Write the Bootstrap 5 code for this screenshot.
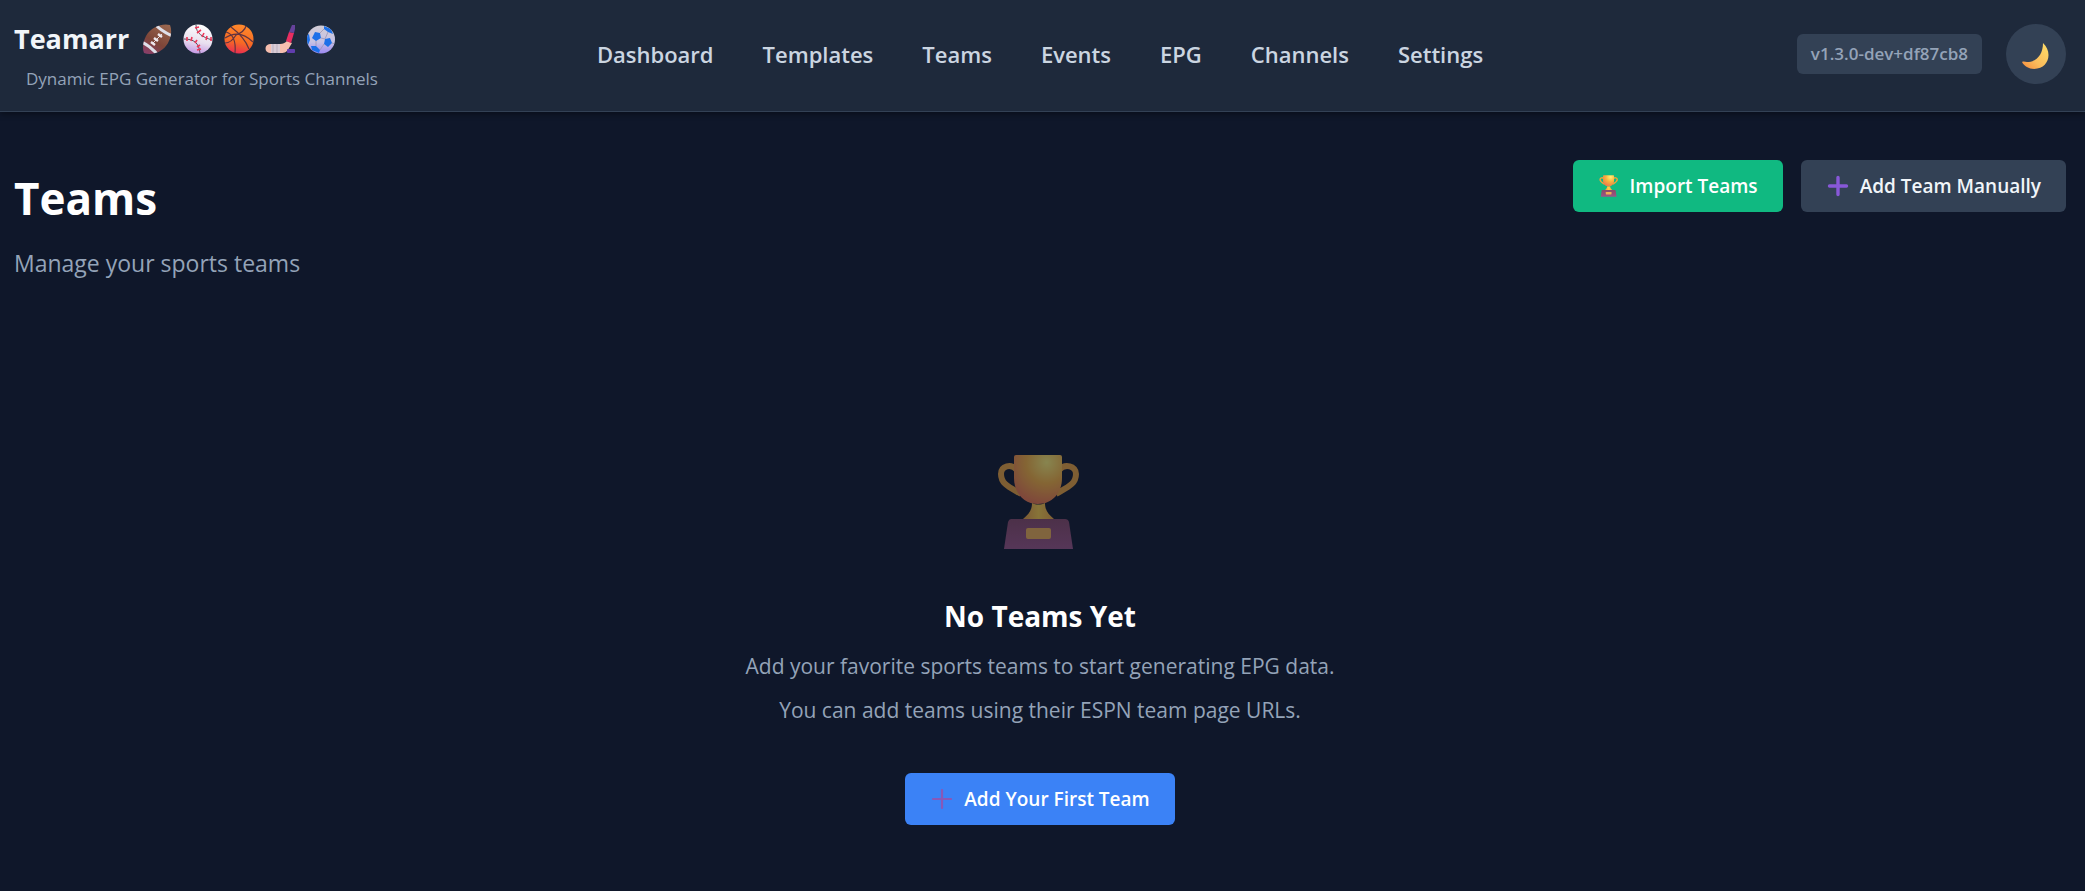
<!DOCTYPE html>
<html lang="en" data-bs-theme="dark">
<head>
<meta charset="utf-8">
<meta name="viewport" content="width=device-width, initial-scale=1">
<title>Teams - Teamarr</title>
<link href="https://cdn.jsdelivr.net/npm/bootstrap@5.3.0/dist/css/bootstrap.min.css" rel="stylesheet">
<style>
  body { background: #0f172a; color: #f1f5f9; font-family: "Open Sans", "Noto Sans", sans-serif; font-size: 20px; line-height: 32px; }
  .site-header { background: #1e293b; border-bottom: 1px solid #334155; box-shadow: 0 2px 6px rgba(0,0,0,.4); padding: 14px 19px 17px 14px; }
  .side { flex: 1 1 0; }
  .brand { font-size: 27px; line-height: 50px; font-weight: 700; color: #f1f5f9; gap: 13px; }
  .sports { gap: 11px; }
  .sports svg { width: 30px; height: 30px; }
  .tagline { font-size: 17px; line-height: 30px; color: #94a3b8; padding-left: 12px; }
  .main-nav { gap: 49px; font-size: 22px; }
  .main-nav .nav-link { color: #cbd5e1; font-weight: 600; padding: 0; }
  .version { background: #334155; color: #94a3b8; font-size: 17px; line-height: 40px; font-weight: 600; border-radius: 6px; padding: 0 14px; }
  .theme-btn { width: 60px; height: 60px; background: #334155; border-radius: 50%; }
  .page { padding: 48px 19px 48px 14px; }
  .page-title { font-size: 44px; line-height: 76px; font-weight: 700; margin-bottom: 8px; }
  .subtitle { font-size: 23px; line-height: 38px; color: #94a3b8; }
  .actions { gap: 18px; }
  .act { height: 52px; padding: 0 25px; border: 0; border-radius: 6px; font-size: 19px; font-weight: 600; color: #f1f5f9; gap: 10px; }
  .act svg { width: 24px; height: 24px; }
  .act .mini-cup { width: 22px; height: 22px; }
  .act-green { background: #10b981; color: #fff; }
  .act-slate { background: #334155; }
  .act-blue { background: #3b82f6; color: #fff; }
  .empty { padding-top: 172px; }
  .empty-cup { width: 96px; height: 96px; opacity: .5; }
  .empty-title { font-size: 28px; line-height: 44px; font-weight: 700; margin: 44px 0 6px; }
  .empty-text { font-size: 21px; line-height: 44px; color: #94a3b8; margin-bottom: 41px; }
</style>
</head>
<body>
<svg width="0" height="0" class="position-absolute" aria-hidden="true">
  <defs>
    <radialGradient id="gold" cx=".68" cy=".15" r=".85"><stop offset="0" stop-color="#fff275"/><stop offset=".5" stop-color="#f9b33e"/><stop offset="1" stop-color="#ee7a4c"/></radialGradient>
    <linearGradient id="stem" x1="0" x2="1"><stop offset="0" stop-color="#e99a3f"/><stop offset=".5" stop-color="#ffd047"/><stop offset="1" stop-color="#f0a63f"/></linearGradient>
    <linearGradient id="base" x1="0" y1="0" x2="0" y2="1"><stop offset="0" stop-color="#8a4a68"/><stop offset="1" stop-color="#9c5686"/></linearGradient>
    <linearGradient id="leather" x1=".8" y1="0" x2=".2" y2="1"><stop offset="0" stop-color="#9a674f"/><stop offset=".6" stop-color="#7d4538"/><stop offset="1" stop-color="#8a3f68"/></linearGradient>
    <linearGradient id="white-ball" x1=".6" y1="0" x2=".4" y2="1"><stop offset="0" stop-color="#fff"/><stop offset=".6" stop-color="#e8dfee"/><stop offset="1" stop-color="#c498e4"/></linearGradient>
    <linearGradient id="orange-ball" x1=".6" y1="0" x2=".4" y2="1"><stop offset="0" stop-color="#ff8a2b"/><stop offset=".6" stop-color="#f76a24"/><stop offset="1" stop-color="#e92c52"/></linearGradient>
    <linearGradient id="soccer" x1=".5" y1="0" x2=".5" y2="1"><stop offset="0" stop-color="#d3cdd3"/><stop offset=".6" stop-color="#c6c2e4"/><stop offset="1" stop-color="#9a86f2"/></linearGradient>
    <linearGradient id="moon" x1="1" y1="0" x2="0" y2="1"><stop offset="0" stop-color="#ffe069"/><stop offset=".6" stop-color="#fbbb5b"/><stop offset="1" stop-color="#f68a3c"/></linearGradient>
    <clipPath id="soccer-clip"><circle cx="15" cy="15.500" r="14"/></clipPath>
    <clipPath id="football-clip"><path d="M4 12C9 3 20-1 28 1c3 7 0 18-7 24C15 30 7 31 2 29c-2-5-1-11 2-17z"/></clipPath>
    <symbol id="cup" viewBox="0 0 96 96">
      <path d="M25 16C19 9 9 12 9 20c0 10 8 13 20 20M67 16c6-7 17-4 17 4 0 10-8 13-20 20" fill="none" stroke="#eda43c" stroke-width="6"/>
      <path d="M24 1h44q2 0 2 2v21c0 15-10 26-24 26S22 39 22 24V3q0-2 2-2z" fill="url(#gold)"/>
      <path d="M40 49c4 2 9 2 13 0 0 7 3 11 9 16H31c6-5 9-9 9-16z" fill="url(#stem)"/>
      <path d="M19 65h54q3 0 4 3l4 27H12l4-27q1-3 3-3z" fill="url(#base)"/>
      <rect x="34" y="74" width="25" height="11" rx="2" fill="#f0b052"/>
    </symbol>
    <symbol id="plus" viewBox="0 0 24 24">
      <path d="M12 3.500v17M3.500 12h17" stroke="currentColor" stroke-width="3.400" stroke-linecap="round"/>
    </symbol>
    <symbol id="plus-thin" viewBox="0 0 24 24">
      <path d="M12 3v18M3 12h18" stroke="currentColor" stroke-width="2.200" stroke-linecap="round"/>
    </symbol>
  </defs>
</svg>

<header class="site-header d-flex align-items-center">
  <div class="side">
    <a href="#" class="brand d-flex align-items-center text-decoration-none">Teamarr
      <span class="sports d-flex" role="img" aria-label="Football, baseball, basketball, hockey and soccer">
        <svg viewBox="0 0 30 30"><g clip-path="url(#football-clip)"><path fill="url(#leather)" d="M0 0h30v30H0z"/><path d="M13 0c4 5 9 8 17 12M0 18c6 3 11 7 16 13" fill="none" stroke="#dfe0ea" stroke-width="3"/><path d="m10 20 10-10" stroke="#e5dfe5" stroke-width="1"/><path d="m9 18 4 3m-1-7 4 3m0-7 4 3" stroke="#eee8ee" stroke-width="2.400"/></g></svg>
        <svg viewBox="0 0 30 30"><circle cx="15" cy="15" r="14.500" fill="url(#white-ball)"/><path d="M13 1c0 9 7 12 16 15M1 15c10 0 15 4 16 14" fill="none" stroke="#59505e" stroke-width="1"/><path d="m12 4 4-1m-2 6 4-3m1 7 2-4m2 7 1-4m4 5v-4M4 13v4m5-4-1 4m6-1-2 3m5 2-3 2m4 2-4 1" stroke="#ee3658" stroke-width="1.600"/></svg>
        <svg viewBox="0 0 30 30"><circle cx="15" cy="15" r="14.500" fill="url(#orange-ball)"/><path d="M7 3c8 6 15 14 18 22M1 14C10 8 20 9 29 18M2 8c7 2 10 10 9 21M12 11c5-2 9-5 10-9M1 19c4 0 8-3 11-8" fill="none" stroke="#613440" stroke-width="1.200"/></svg>
        <svg viewBox="0 0 30 30"><path d="m22 17 5 2-3 5c-2 4-4 5-8 5H5c-6 0-6-9 0-9h10c3 0 5-1 7-3z" fill="#f5bdae"/><path d="m24 8 5 1-3 10-5-2z" fill="#e92e61"/><path d="m27 1 3 0v4l-1 4-5-1z" fill="#66429b"/><path d="M6 20h9v9H6z" fill="#d8cbd5"/><path d="M8 20v9m4-9v9" stroke="#b9adbd"/><rect x="22" y="25" width="8" height="4" rx="1" fill="#603dae"/></svg>
        <svg viewBox="0 0 30 30"><g clip-path="url(#soccer-clip)"><path fill="url(#soccer)" d="M0 0h30v30H0z"/><path d="m9 8 5 1 1 5-5 3-4-3zM19 15l5-1 2 5-4 4-4-3zM18 2l7 3 2 5-5-2-4-3zM5 22l5 0 4 4-1 3-7-3zM1 11l2-1 1 6-2 5-2-3z" fill="#1c70e8"/><path d="m14 9 4-4m-3 9 4 1m-9 2v5m8-2-4 6m8-18-3 7m7 4 3 1" fill="none" stroke="#9994b2" stroke-width=".8"/></g></svg>
      </span>
    </a>
    <div class="tagline">Dynamic EPG Generator for Sports Channels</div>
  </div>
  <nav class="main-nav nav flex-nowrap" aria-label="Main">
    <a class="nav-link" href="#">Dashboard</a>
    <a class="nav-link" href="#">Templates</a>
    <a class="nav-link" href="#">Teams</a>
    <a class="nav-link" href="#">Events</a>
    <a class="nav-link" href="#">EPG</a>
    <a class="nav-link" href="#">Channels</a>
    <a class="nav-link" href="#">Settings</a>
  </nav>
  <div class="side d-flex justify-content-end align-items-center gap-4">
    <span class="version">v1.3.0-dev+df87cb8</span>
    <button type="button" class="theme-btn btn border-0 p-0 d-flex align-items-center justify-content-center" aria-label="Toggle theme">
      <svg width="30" height="30" viewBox="0 0 30 30"><path d="M22 4c10 9 6 26-9 26C8 30 3 27 1 23c2-1 3 0 5 0C16 23 22 15 22 4z" fill="url(#moon)"/></svg>
    </button>
  </div>
</header>

<main class="page">
  <div class="d-flex justify-content-between align-items-start">
    <div>
      <h1 class="page-title">Teams</h1>
      <p class="subtitle mb-0">Manage your sports teams</p>
    </div>
    <div class="actions d-flex">
      <button type="button" class="btn act act-green d-flex align-items-center"><svg class="mini-cup" aria-hidden="true"><use href="#cup"/></svg>Import Teams</button>
      <button type="button" class="btn act act-slate d-flex align-items-center"><svg aria-hidden="true" style="color:#8858d8"><use href="#plus"/></svg>Add Team Manually</button>
    </div>
  </div>
  <section class="empty d-flex flex-column align-items-center text-center">
    <svg class="empty-cup" aria-hidden="true"><use href="#cup"/></svg>
    <h2 class="empty-title">No Teams Yet</h2>
    <p class="empty-text">Add your favorite sports teams to start generating EPG data.<br>You can add teams using their ESPN team page URLs.</p>
    <button type="button" class="btn act act-blue d-flex align-items-center"><svg aria-hidden="true" style="color:#8858b8"><use href="#plus-thin"/></svg>Add Your First Team</button>
  </section>
</main>
<script src="https://cdn.jsdelivr.net/npm/bootstrap@5.3.0/dist/js/bootstrap.bundle.min.js"></script>
</body>
</html>
